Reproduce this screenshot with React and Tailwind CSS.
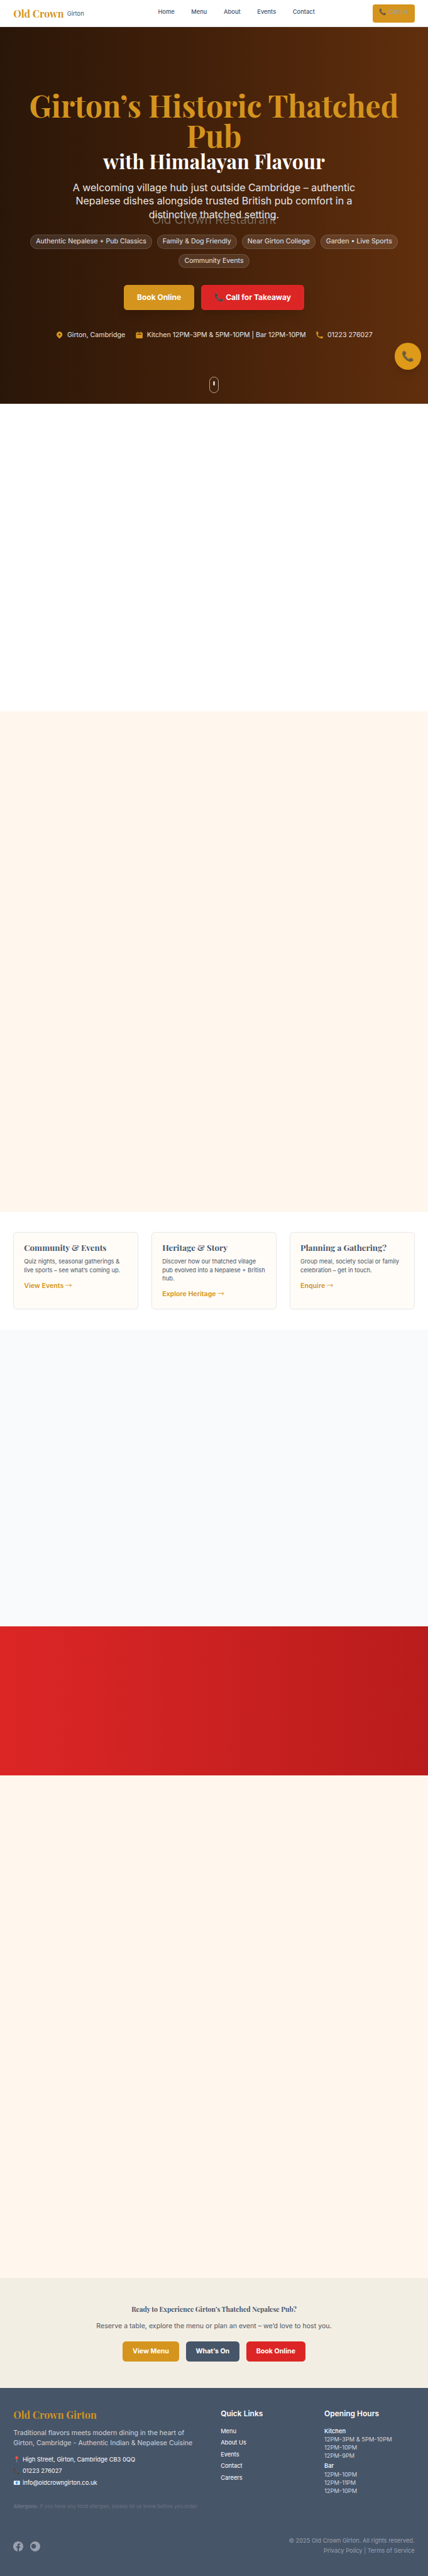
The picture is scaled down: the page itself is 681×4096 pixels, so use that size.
const SANS = "font-['Inter','Liberation_Sans',sans-serif]";
const SERIF = "font-['Playfair_Display','Liberation_Serif',serif] font-bold";

const NAV = ["Home", "Menu", "About", "Events", "Contact"];
const PILLS = [
  "Authentic Nepalese + Pub Classics",
  "Family & Dog Friendly",
  "Near Girton College",
  "Garden • Live Sports",
  "Community Events",
];
const FACTS = [
  {
    text: "Girton, Cambridge",
    d: "M5.05 4.05a7 7 0 119.9 9.9L10 18.9l-4.95-4.95a7 7 0 010-9.9zM10 11a2 2 0 100-4 2 2 0 000 4z",
  },
  {
    text: "Kitchen 12PM-3PM & 5PM-10PM | Bar 12PM-10PM",
    d: "M6 2a1 1 0 00-1 1v1H4a2 2 0 00-2 2v10a2 2 0 002 2h12a2 2 0 002-2V6a2 2 0 00-2-2h-1V3a1 1 0 10-2 0v1H7V3a1 1 0 00-1-1zm0 5a1 1 0 000 2h8a1 1 0 100-2H6z",
  },
  {
    text: "01223 276027",
    d: "M2 3a1 1 0 011-1h2.153a1 1 0 01.986.836l.74 4.435a1 1 0 01-.54 1.06l-1.548.773a11.037 11.037 0 006.105 6.105l.774-1.548a1 1 0 011.059-.54l4.435.74a1 1 0 01.836.986V17a1 1 0 01-1 1h-2C7.82 18 2 12.18 2 5V3z",
  },
];
const CARDS = [
  {
    title: "Community & Events",
    lines: ["Quiz nights, seasonal gatherings &", "live sports – see what’s coming up."],
    link: "View Events",
  },
  {
    title: "Heritage & Story",
    lines: ["Discover how our thatched village", "pub evolved into a Nepalese + British", "hub."],
    link: "Explore Heritage",
  },
  {
    title: "Planning a Gathering?",
    lines: ["Group meal, society social or family", "celebration – get in touch."],
    link: "Enquire",
  },
];
const LINKS = ["Menu", "About Us", "Events", "Contact", "Careers"];
const HOURS = [
  { name: "Kitchen", rows: ["12PM-3PM & 5PM-10PM", "12PM-10PM", "12PM-9PM"] },
  { name: "Bar", rows: ["12PM-10PM", "12PM-11PM", "12PM-10PM"] },
];

function Header() {
  return (
    <header className="flex h-16.25 items-start border-b border-gray-200 bg-white px-8">
      <div className="flex w-86.5 items-start pt-4">
        <span className={`${SERIF} text-2xl leading-8 text-[#d4941e]`}>Old Crown</span>
        <span className="mt-1.5 ml-2 text-sm text-slate-600">Girton</span>
      </div>
      <nav className="flex gap-10 pt-4.5 text-sm font-medium text-slate-600">
        {NAV.map((n) => (
          <a key={n}>{n}</a>
        ))}
      </nav>
      <a className="mt-2.5 ml-auto h-11 rounded-md bg-[#d4941e] px-4 pt-2 text-sm font-medium whitespace-nowrap text-gray-400">
        <span className="opacity-80">📞</span> Call Us
      </a>
    </header>
  );
}

function Hero() {
  return (
    <section className="relative h-225 bg-linear-to-r/srgb from-[#2a1608] via-[#44210a] to-[#612f0d] text-center">
      <div className="absolute inset-x-0 top-110.75 text-[1.8rem] leading-9 text-[#76695a] blur-[0.4px]">
        Old Crown Restaurant
      </div>
      <div className="relative flex flex-col items-center pt-38">
        <h1 className={`${SERIF} text-7xl leading-18 text-[#d4941e]`}>
          Girton’s Historic Thatched
          <br />
          Pub
        </h1>
        <div className={`${SERIF} text-5xl leading-12 text-white`}>with Himalayan Flavour</div>
        <p className="mt-6 max-w-175 text-2xl leading-8 text-gray-200">
          A welcoming village hub just outside Cambridge – authentic Nepalese dishes alongside trusted British pub
          comfort in a distinctive thatched setting.
        </p>
        <div className="mt-8 flex max-w-225 flex-wrap justify-center gap-3">
          {PILLS.map((p) => (
            <span
              key={p}
              className="flex h-8.5 items-center rounded-full border border-white/12 bg-white/10 px-3 text-base leading-6 text-gray-200"
            >
              {p}
            </span>
          ))}
        </div>
        <div className="mt-10 flex gap-4 text-lg leading-7 font-bold text-white">
          <a className="rounded-lg bg-[#d4941e] px-8 py-4 shadow-lg">Book Online</a>
          <a className="rounded-lg bg-[#dc2626] px-8 py-4 shadow-lg">📞 Call for Takeaway</a>
        </div>
        <div className="mt-12 flex gap-6 text-base leading-6 text-gray-200">
          {FACTS.map((f) => (
            <span key={f.text} className="flex items-center gap-2">
              <svg viewBox="0 0 20 20" className="size-5 fill-[#d4941e]">
                <path fillRule="evenodd" clipRule="evenodd" d={f.d} />
              </svg>
              {f.text}
            </span>
          ))}
        </div>
      </div>
      <div className="absolute bottom-6.25 left-1/2 flex h-10 w-6 -translate-x-1/2 justify-center rounded-full border border-white/60 pt-2.25">
        <div className="h-3 w-1 rounded-full bg-white/75" />
      </div>
      <div className="absolute top-188.75 right-4 flex size-16 items-center justify-center rounded-full bg-[#de9a18] text-2xl leading-8 shadow-lg">
        <span className="opacity-75">📞</span>
      </div>
    </section>
  );
}

function Cards() {
  return (
    <section className="grid h-70.5 grid-cols-3 gap-8 bg-white px-8 py-12">
      {CARDS.map((c) => (
        <article key={c.title} className="rounded-lg border border-gray-200 bg-[#fffcf7] px-6 pt-6">
          <h3 className={`${SERIF} mb-2 text-xl leading-7 whitespace-nowrap text-slate-600`}>{c.title}</h3>
          <p className="text-sm whitespace-nowrap text-gray-600">
            {c.lines.map((l) => (
              <span key={l} className="block">
                {l}
              </span>
            ))}
          </p>
          <a className="mt-4 block text-base leading-6 font-semibold text-[#d4941e]">
            {c.link} <span className="font-['Noto_Sans_CJK_SC',sans-serif] leading-none font-normal">→</span>
          </a>
        </article>
      ))}
    </section>
  );
}

function Cta() {
  return (
    <section className="flex h-66 flex-col items-center bg-[#f3eee3] pt-16">
      <h2 className={`${SERIF} text-base leading-6 text-slate-600`}>
        Ready to Experience Girton’s Thatched Nepalese Pub?
      </h2>
      <p className="mt-4 text-base leading-6 text-gray-600">
        Reserve a table, explore the menu or plan an event – we’d love to host you.
      </p>
      <div className="mt-6 flex gap-4 text-base leading-6 font-bold text-white">
        <a className="rounded-lg bg-[#d4941e] px-6 py-3">View Menu</a>
        <a className="rounded-lg bg-[#475569] px-6 py-3">What’s On</a>
        <a className="rounded-lg bg-[#dc2626] px-6 py-3">Book Online</a>
      </div>
    </section>
  );
}

function Footer() {
  return (
    <footer className="h-112.25 bg-[#475569] px-8 pt-12 text-white">
      <div className="grid h-68.75 grid-cols-4 gap-8 border-b border-gray-600">
        <div className="col-span-2">
          <h3 className={`${SERIF} text-2xl leading-8 text-[#d4941e]`}>Old Crown Girton</h3>
          <p className="mt-4 text-base leading-6 text-gray-300">
            Traditional flavors meets modern dining in the heart of
            <br />
            Girton, Cambridge - Authentic Indian &amp; Nepalese Cuisine
          </p>
          <div className="mt-4 flex flex-col gap-2 text-sm">
            <span>📍 High Street, Girton, Cambridge CB3 0QQ</span>
            <span>📞 01223 276027</span>
            <span>📧 info@oldcrowngirton.co.uk</span>
          </div>
          <p className="mt-9.5 text-xs text-gray-500">
            <strong>Allergens:</strong> If you have any food allergies, please let us know before you order
          </p>
        </div>
        <div>
          <h4 className="text-lg leading-7 font-semibold">Quick Links</h4>
          <div className="mt-4 flex flex-col gap-2 text-sm">
            {LINKS.map((l) => (
              <a key={l}>{l}</a>
            ))}
          </div>
        </div>
        <div>
          <h4 className="text-lg leading-7 font-semibold">Opening Hours</h4>
          <div className="mt-4 flex flex-col gap-1 text-sm">
            {HOURS.map((h) => (
              <div key={h.name}>
                <div className="font-medium">{h.name}</div>
                {h.rows.map((r, i) => (
                  <div key={i} className="text-gray-300">
                    {r}
                  </div>
                ))}
              </div>
            ))}
          </div>
        </div>
      </div>
      <div className="flex items-start justify-between pt-8 text-sm text-gray-400">
        <div className="flex gap-4 pt-2.75">
          <svg viewBox="0 0 24 24" className="size-6 fill-current">
            <path d="M24 12.073c0-6.627-5.373-12-12-12s-12 5.373-12 12c0 5.99 4.388 10.954 10.125 11.854v-8.385H7.078v-3.47h3.047V9.43c0-3.007 1.792-4.669 4.533-4.669 1.312 0 2.686.235 2.686.235v2.953H15.83c-1.491 0-1.956.925-1.956 1.874v2.25h3.328l-.532 3.47h-2.796v8.385C19.612 23.027 24 18.062 24 12.073z" />
          </svg>
          <svg viewBox="0 0 24 24" className="size-6 fill-current">
            <path
              fillRule="evenodd"
              d="M12 0a12 12 0 100 24 12 12 0 000-24zM8.4 6a5.5 5.5 0 110 11 5.5 5.5 0 010-11z"
            />
          </svg>
        </div>
        <div className="flex flex-col gap-1 text-right">
          <span>© 2025 Old Crown Girton. All rights reserved.</span>
          <span>Privacy Policy | Terms of Service</span>
        </div>
      </div>
    </footer>
  );
}

export default function App() {
  return (
    <div className={`${SANS} h-[4096px] w-full overflow-hidden bg-[#475569]`}>
      {/* The whole rem scale is compact: 1rem = 10.64px. */}
      <style>{"html{font-size:10.6407px}"}</style>
      <Header />
      <Hero />
      <section className="h-184 bg-white" />
      <section className="h-299 bg-[#fff7ed]" />
      <Cards />
      <section className="h-177.5 bg-[#f9fafc]" />
      <section className="h-89 bg-linear-to-r/srgb from-[#dc2626] to-[#b91c1c]" />
      <section className="h-300.25 bg-[#fff7ed]" />
      <Cta />
      <Footer />
    </div>
  );
}
